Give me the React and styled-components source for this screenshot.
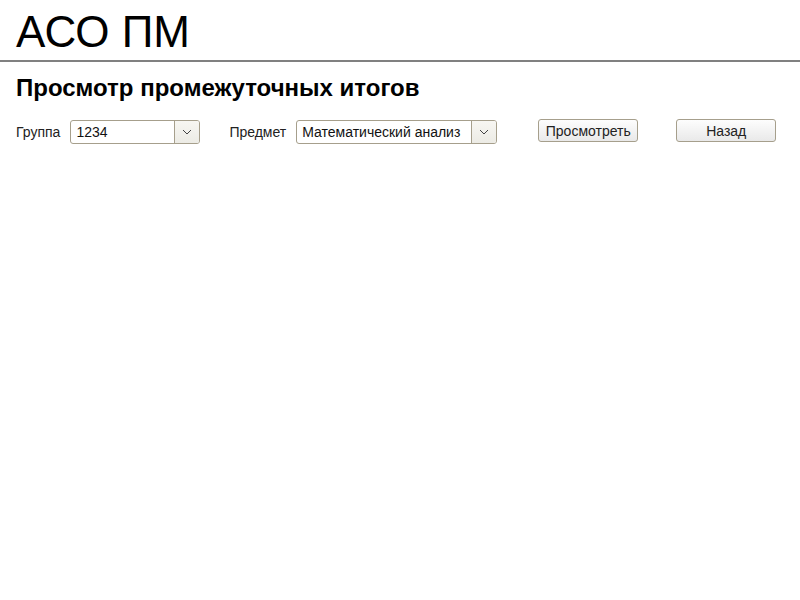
import React from 'react'
import styled, { createGlobalStyle } from 'styled-components'

const GlobalStyle = createGlobalStyle`
  html, body {
    margin: 0;
    padding: 0;
    background: #ffffff;
    font-family: "Liberation Sans", Arial, sans-serif;
    color: #000;
  }
`;

const Header = styled.header`
  padding: 8px 16px 0;
  height: 52px;
  border-bottom: 2px solid #808080;
  box-sizing: content-box;
`;

const Logo = styled.h1`
  margin: 0;
  font-size: 44px;
  font-weight: 400;
  line-height: 48px;
`;

const Content = styled.main`
  padding: 11px 16px;
`;

const Title = styled.h2`
  margin: 0 0 16px;
  font-size: 24px;
  font-weight: 700;
  line-height: 30px;
`;

const Toolbar = styled.div`
  display: flex;
  align-items: center;
`;

const Field = styled.label`
  display: flex;
  align-items: center;
  gap: 10px;
  font-size: 14px;
  color: #222;
  margin-right: ${p => p.$after}px;
`;

const Select = styled.div`
  display: flex;
  width: ${p => p.$width}px;
  height: 24px;
  box-sizing: border-box;
  border: 1px solid #a69f8c;
  border-radius: 3px;
  background: #fff;
  overflow: hidden;
`;

const Value = styled.span`
  flex: 1;
  padding: 0 5px;
  font-size: 14px;
  line-height: 22px;
  color: #111;
  white-space: nowrap;
  overflow: hidden;
`;

const Arrow = styled.span`
  width: 24px;
  display: flex;
  align-items: center;
  justify-content: center;
  border-left: 1px solid #a69f8c;
  background: linear-gradient(#f7f6f2, #ecebe5);
`;

const Button = styled.button`
  width: ${p => p.$width}px;
  height: 23px;
  margin: 0 ${p => p.$after || 0}px 2px 0;
  padding: 0;
  border: 1px solid #a69f8c;
  border-radius: 3px;
  background: linear-gradient(#fdfdfd, #e9e9e9);
  font-family: "Liberation Sans", Arial, sans-serif;
  font-size: 14px;
  color: #222;
`;

const Chevron = () => (
  <svg width="10" height="6" viewBox="0 0 10 6">
    <path d="M1 1l4 4 4-4" fill="none" stroke="#444" strokeWidth="1" />
  </svg>
);

const Dropdown = ({ value, width }) => (
  <Select $width={width}>
    <Value>{value}</Value>
    <Arrow><Chevron /></Arrow>
  </Select>
);

export default function App() {
  return (
    <>
      <GlobalStyle />
      <Header>
        <Logo>АСО ПМ</Logo>
      </Header>
      <Content>
        <Title>Просмотр промежуточных итогов</Title>
        <Toolbar>
          <Field $after={29}>
            Группа
            <Dropdown value="1234" width={130} />
          </Field>
          <Field $after={41}>
            Предмет
            <Dropdown value="Математический анализ" width={201} />
          </Field>
          <Button $width={100} $after={38}>Просмотреть</Button>
          <Button $width={100}>Назад</Button>
        </Toolbar>
      </Content>
    </>
  );
}
